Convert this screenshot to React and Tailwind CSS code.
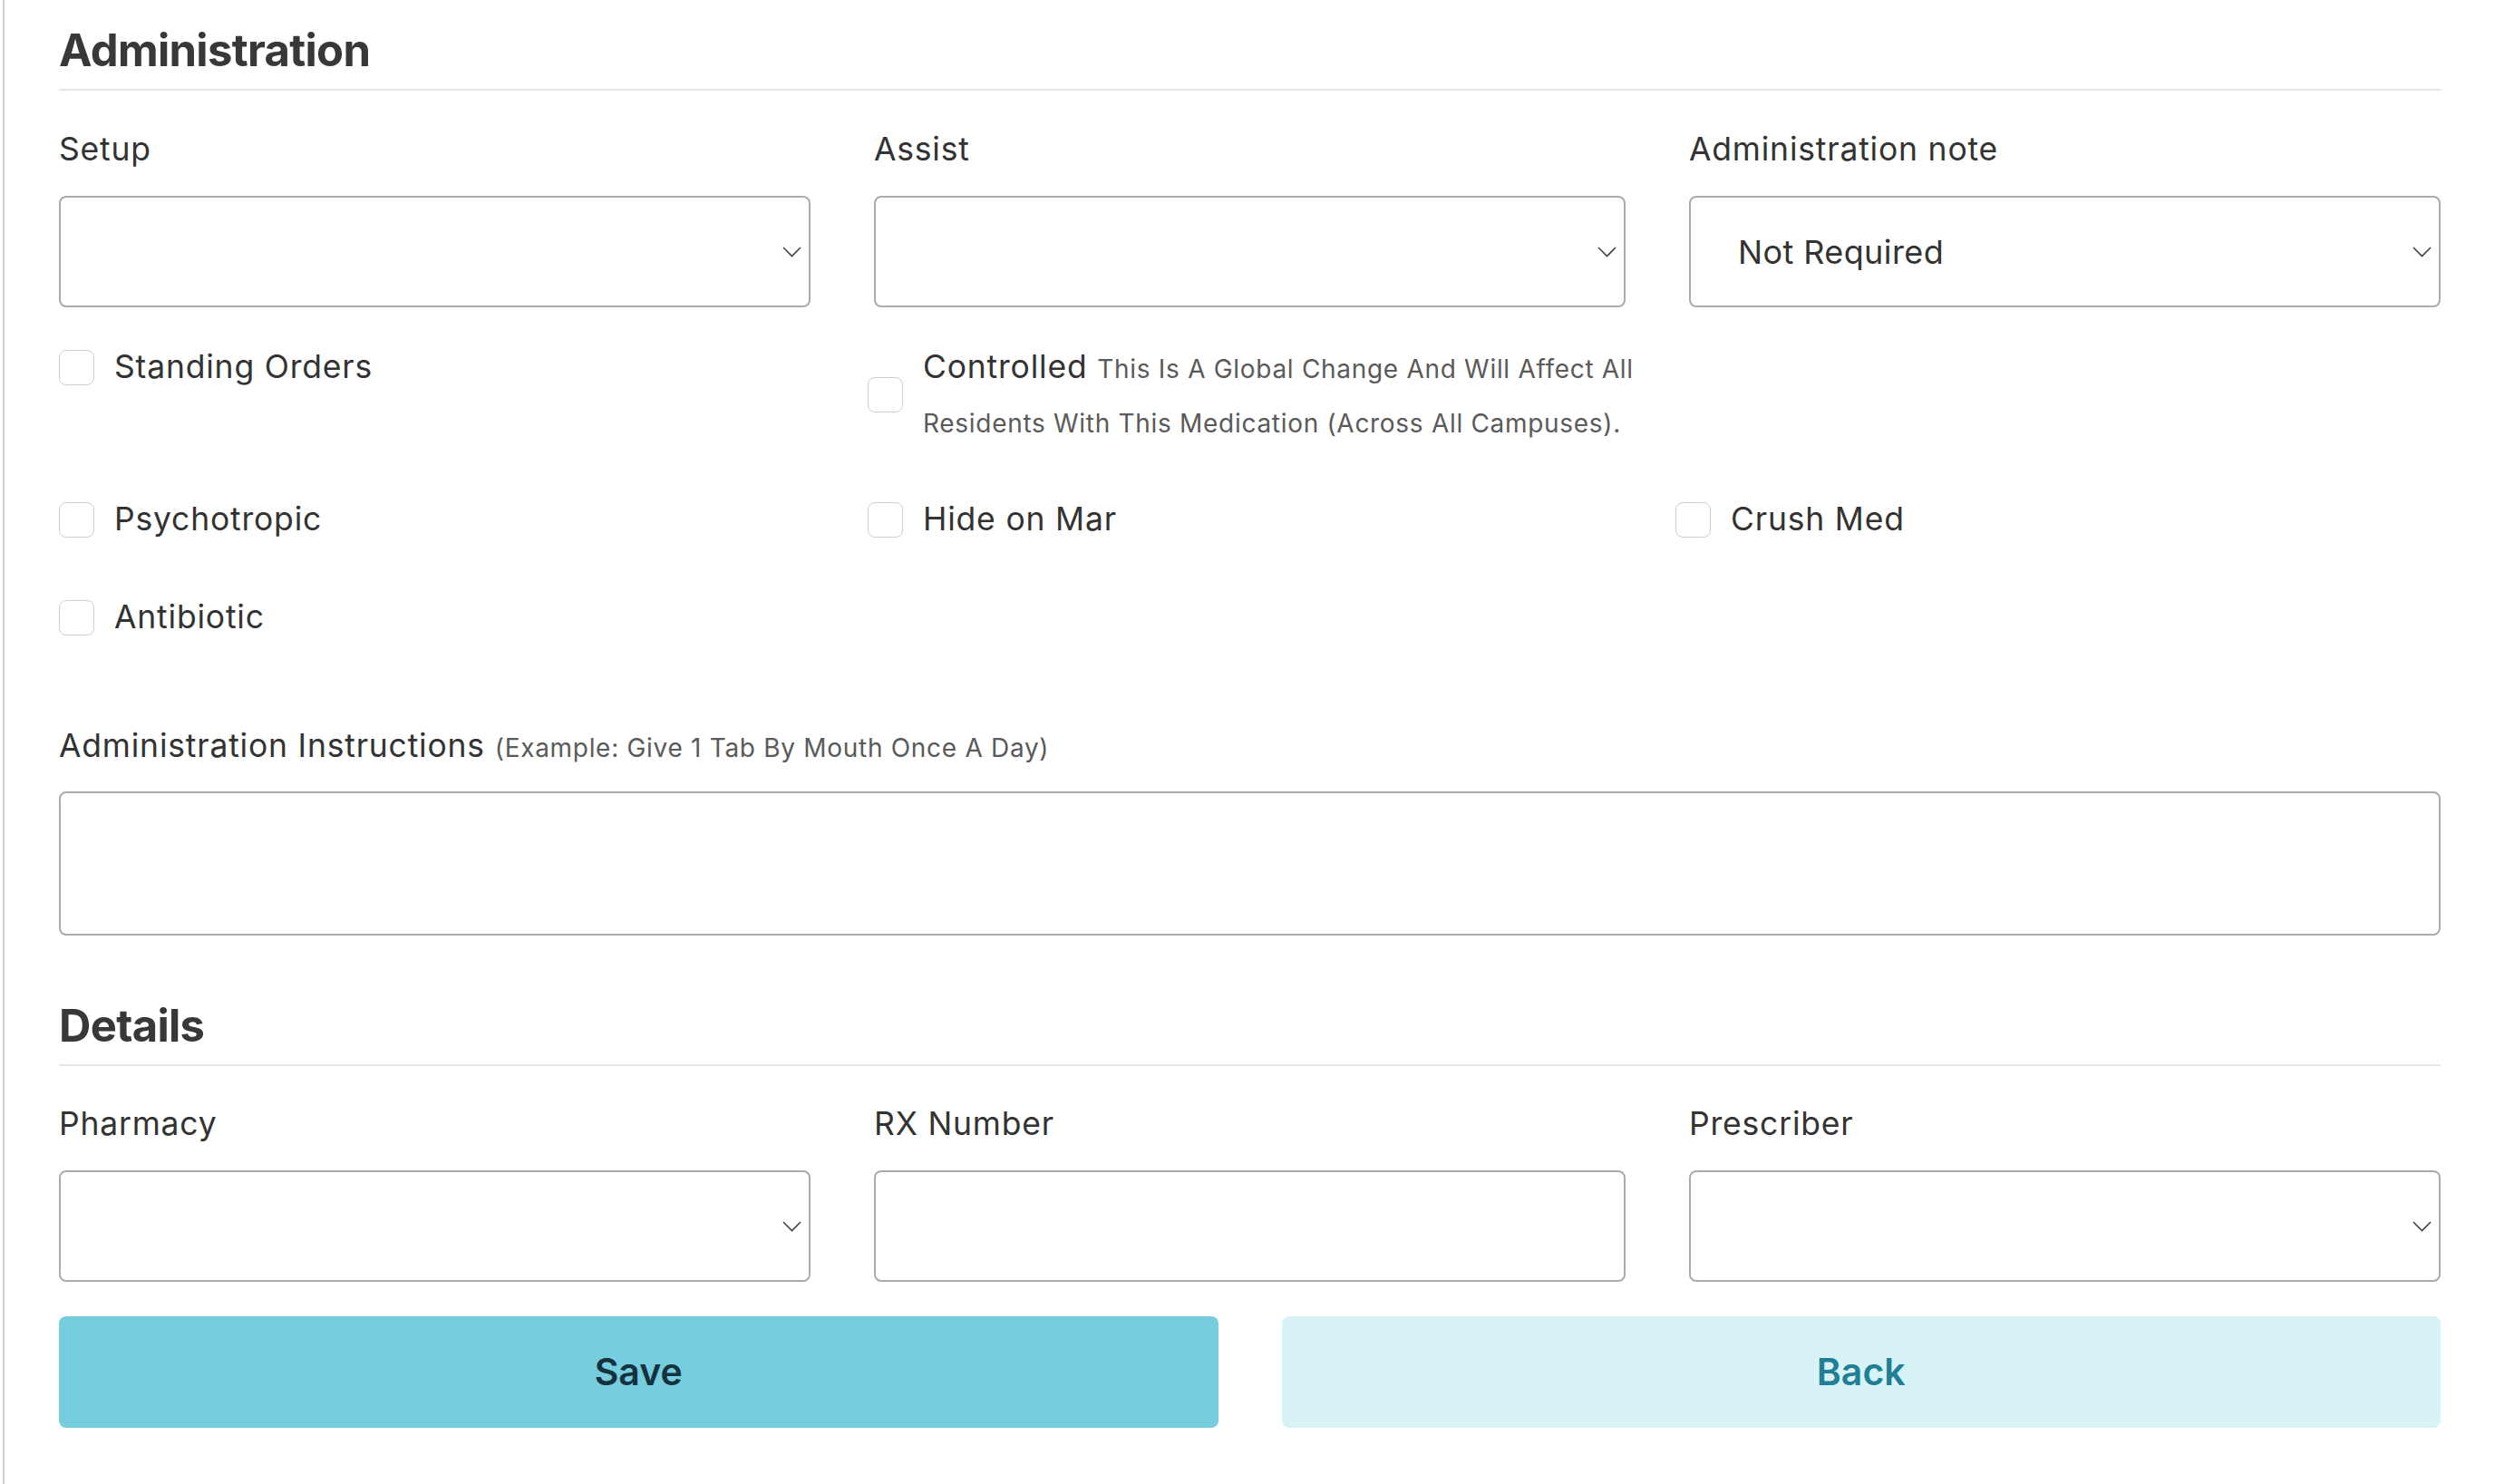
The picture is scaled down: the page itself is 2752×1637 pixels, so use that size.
import { useState } from "react";

function Chevron() {
  return (
    <svg
      className="pointer-events-none absolute right-[10px] top-1/2 -translate-y-1/2"
      width="21"
      height="12"
      viewBox="0 0 21 12"
      fill="none"
    >
      <polyline points="1,1 10.5,10.5 20,1" stroke="#444" strokeWidth="1.6" />
    </svg>
  );
}

function SelectField({ label, value, options = [] }) {
  return (
    <div className="flex flex-col">
      <label className="text-[35.5px] leading-[42px] tracking-[0.8px] text-[#333]">{label}</label>
      <div className="relative mt-[30px]">
        <select
          defaultValue={value}
          className="h-[123px] w-full appearance-none rounded-[8px] border-2 border-[#ababab] bg-white pl-[52px] pr-[40px] text-[36px] tracking-[0.4px] text-[#333] outline-none"
        >
          <option value=""></option>
          {options.map((o) => (
            <option key={o} value={o}>
              {o}
            </option>
          ))}
        </select>
        <Chevron />
      </div>
    </div>
  );
}

function TextField({ label }) {
  return (
    <div className="flex flex-col">
      <label className="text-[35.5px] leading-[42px] tracking-[0.8px] text-[#333]">{label}</label>
      <input
        type="text"
        className="mt-[30px] h-[123px] w-full rounded-[8px] border-2 border-[#ababab] bg-white px-[30px] text-[36px] text-[#333] outline-none"
      />
    </div>
  );
}

function Check({ children }) {
  const [checked, setChecked] = useState(false);
  return (
    <label className="flex items-center gap-[22px] self-start">
      <input
        type="checkbox"
        checked={checked}
        onChange={() => setChecked(!checked)}
        className="h-[39px] w-[39px] shrink-0 appearance-none rounded-[8px] border-[1.5px] border-[#cfcfcf] bg-white checked:border-[#76cdde] checked:bg-[#76cdde]"
      />
      <span className="text-[35.5px] leading-[60px] tracking-[0.8px] text-[#333]">{children}</span>
    </label>
  );
}

function SectionTitle({ children, className = "" }) {
  return (
    <h2
      className={`border-b-2 border-[#e6e6e6] pb-[12px] text-[49px] font-bold leading-[60px] tracking-[-0.7px] text-[#383838] ${className}`}
    >
      {children}
    </h2>
  );
}

export default function App() {
  return (
    <div className="min-h-screen bg-white font-['Inter',sans-serif]">
      <div className="ml-[3px] min-h-screen border-l-2 border-[#d1d1d1] px-[60px] pb-[63px] pt-[26px]">
        <SectionTitle>Administration</SectionTitle>

        <div className="mt-[44px] grid grid-cols-3 gap-x-[70px]">
          <SelectField label="Setup" value="" options={["Self", "Staff"]} />
          <SelectField label="Assist" value="" options={["Yes", "No"]} />
          <SelectField
            label="Administration note"
            value="Not Required"
            options={["Not Required", "Required"]}
          />
        </div>

        <div className="mt-[36px] grid grid-cols-[892px_891px_1fr] items-start gap-y-[48px]">
          <Check>Standing Orders</Check>
          <Check>
            <span className="whitespace-nowrap">
              Controlled{" "}
              <span className="text-[28px] leading-[40px] tracking-[0.7px] text-[#5a5a5a]">
                This Is A Global Change And Will Affect All
              </span>
            </span>
            <br />
            <span className="whitespace-nowrap text-[28px] leading-[40px] tracking-[0.7px] text-[#5a5a5a]">
              Residents With This Medication (Across All Campuses).
            </span>
          </Check>
          <div />
          <Check>Psychotropic</Check>
          <Check>Hide on Mar</Check>
          <Check>Crush Med</Check>
          <Check>Antibiotic</Check>
        </div>

        <div className="mt-[91px] flex flex-col">
          <label className="text-[35.5px] leading-[42px] tracking-[0.8px] text-[#333]">
            Administration Instructions{" "}
            <span className="text-[28px] tracking-[0.7px] text-[#5a5a5a]">
              (Example: Give 1 Tab By Mouth Once A Day)
            </span>
          </label>
          <textarea className="mt-[27px] h-[159px] w-full resize-none rounded-[8px] border-2 border-[#ababab] bg-white p-[20px] text-[35px] text-[#333] outline-none" />
        </div>

        <SectionTitle className="mt-[70px]">Details</SectionTitle>

        <div className="mt-[43px] grid grid-cols-3 gap-x-[70px]">
          <SelectField label="Pharmacy" value="" options={["CVS", "Walgreens"]} />
          <TextField label="RX Number" />
          <SelectField label="Prescriber" value="" options={["Dr. Smith"]} />
        </div>

        <div className="mt-[38px] grid grid-cols-2 gap-x-[70px]">
          <button className="h-[123px] rounded-[8px] bg-[#76cdde] text-[41px] font-semibold text-[#15323f]">
            Save
          </button>
          <button className="h-[123px] rounded-[8px] bg-[#d8f3f6] text-[41px] font-semibold text-[#207f96]">
            Back
          </button>
        </div>
      </div>
    </div>
  );
}
